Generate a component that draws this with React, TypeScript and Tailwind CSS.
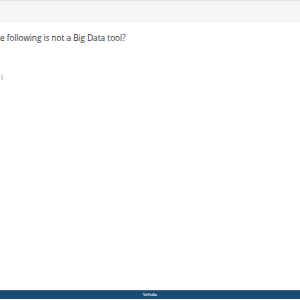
const App = () => {
  return (
    <div className="flex flex-col w-[300px] h-[300px] bg-white overflow-hidden" style={{ fontFamily: '"Open Sans", "Noto Sans", sans-serif' }}>
      <div className="h-[22px] shrink-0 bg-[#f6f6f6] border-t border-t-[#e4e4e4] border-b border-b-[#ebebeb]" />
      <div className="pt-[10px] text-[8.2px] leading-[12px] text-[#333] whitespace-nowrap">
        e following is not a Big Data tool?
      </div>
      <div className="mt-[27px] pl-[1px] text-[8px] leading-[12px] text-[#888]">l</div>
      <div className="flex-1" />
      <div className="h-[9px] mb-[1px] shrink-0 bg-[#1b4a72] border-t border-t-[#3d6a90] flex items-center justify-center">
        <span className="text-[4px] leading-[4px] text-white font-semibold">Vefsíða</span>
      </div>
    </div>
  );
};

export default App;
